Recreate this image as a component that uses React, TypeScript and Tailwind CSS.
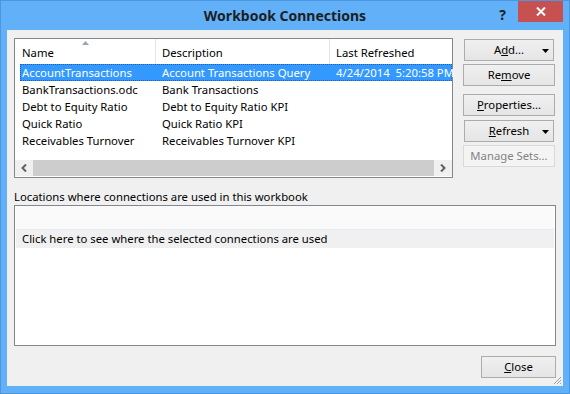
import React from "react";

type Row = { name: string; desc: string; refreshed?: string };

const rows: Row[] = [
  { name: "AccountTransactions", desc: "Account Transactions Query", refreshed: "4/24/2014  5:20:58 PM" },
  { name: "BankTransactions.odc", desc: "Bank Transactions" },
  { name: "Debt to Equity Ratio", desc: "Debt to Equity Ratio KPI" },
  { name: "Quick Ratio", desc: "Quick Ratio KPI" },
  { name: "Receivables Turnover", desc: "Receivables Turnover KPI" },
];

function DropArrow() {
  return (
    <svg width="7" height="4" viewBox="0 0 7 4" className="absolute right-[4px] top-[9px]">
      <path d="M0 0h7L3.5 4z" fill="#000" />
    </svg>
  );
}

function Btn({
  children,
  disabled,
  split,
  className = "",
}: {
  children: React.ReactNode;
  disabled?: boolean;
  split?: boolean;
  className?: string;
}) {
  return (
    <div
      className={
        "relative flex h-[22px] items-center justify-center border leading-none " +
        (disabled
          ? "border-[#d9d9d9] bg-[#f4f4f4] text-[#838383] "
          : "border-[#acacac] bg-gradient-to-b from-[#f0f0f0] to-[#e5e5e5] text-black ") +
        className
      }
    >
      <span>{children}</span>
      {split && <DropArrow />}
    </div>
  );
}

export default function App() {
  return (
    <div className="flex h-[394px] w-[570px] flex-col border border-[#4a97df] bg-[#61b0f8] font-['Noto_Sans',sans-serif] text-[11.3px] text-black">
      {/* title bar */}
      <div className="grid h-[29px] grid-cols-[1fr_auto_1fr]">
        <div />
        <div className="pt-[4px] text-[14px] font-bold text-[#1e1e1e]">Workbook Connections</div>
        <div className="flex items-start justify-end pr-[6px]">
          <span className="mr-[12px] mt-[3px] text-[14px] font-bold text-[#1e1e1e]">?</span>
          <div className="flex h-[21px] w-[45px] items-center justify-center bg-[#c75050]">
            <svg width="10" height="9" viewBox="0 0 10 9">
              <path d="M1 0.5l8 8M9 0.5l-8 8" stroke="#fff" strokeWidth="2" />
            </svg>
          </div>
        </div>
      </div>

      {/* client area */}
      <div className="relative mx-[6px] mb-[7px] flex flex-1 flex-col bg-[#f0f0f0] px-[7px] pt-[8px]">
        <div className="flex items-start gap-[10px]">
          {/* list view */}
          <div className="flex h-[140px] w-[439px] flex-col border border-[#828790] bg-white">
            <div className="flex h-[25px] shrink-0 items-center">
              <div className="relative flex h-full w-[140px] shrink-0 items-center pl-[7px] pt-[3px]">
                <svg width="7" height="4" viewBox="0 0 7 4" className="absolute left-[67px] top-[2px]">
                  <path d="M3.5 0L7 4H0z" fill="#97a6b9" />
                </svg>
                Name
              </div>
              <div className="h-full w-px shrink-0 bg-[#e5e5e5]" />
              <div className="flex h-full w-[173px] shrink-0 items-center pl-[6px] pt-[3px]">Description</div>
              <div className="h-full w-px shrink-0 bg-[#e5e5e5]" />
              <div className="flex h-full flex-1 items-center pl-[6px] pt-[3px]">Last Refreshed</div>
            </div>
            <div className="flex flex-col pl-[5px]">
              {rows.map((r, i) => (
                <div
                  key={r.name}
                  className={
                    "flex h-[17px] items-center whitespace-pre pt-px " +
                    (i === 0 ? "border border-dotted border-[#1c5fae] bg-[#3399ff] text-white" : "border border-transparent")
                  }
                >
                  <div className="w-[135px] shrink-0 pl-px">{r.name}</div>
                  <div className="w-[174px] shrink-0 pl-[6px]">{r.desc}</div>
                  <div className="min-w-0 flex-1 pl-[6px]">{r.refreshed ?? ""}</div>
                </div>
              ))}
            </div>
            <div className="flex-1" />
            {/* horizontal scrollbar */}
            <div className="mb-px flex h-[16px] shrink-0 bg-[#f0f0f0]">
              <div className="flex w-[18px] items-center justify-center">
                <svg width="6" height="8" viewBox="0 0 6 8">
                  <path d="M5 0.5L1.5 4L5 7.5" stroke="#606060" strokeWidth="2" fill="none" />
                </svg>
              </div>
              <div className="flex-1 bg-[#cdcdcd]" />
              <div className="flex w-[18px] items-center justify-center">
                <svg width="6" height="8" viewBox="0 0 6 8">
                  <path d="M1 0.5L4.5 4L1 7.5" stroke="#606060" strokeWidth="2" fill="none" />
                </svg>
              </div>
            </div>
          </div>

          {/* buttons */}
          <div className="flex w-[92px] flex-col pt-px">
            <Btn split className="mx-px">
              A<span className="underline">d</span>d...
            </Btn>
            <Btn className="mt-[3px]">
              Re<span className="underline">m</span>ove
            </Btn>
            <Btn className="mt-[8px]">
              <span className="underline">P</span>roperties...
            </Btn>
            <Btn split className="mx-px mt-[4px]">
              <span className="underline">R</span>efresh
            </Btn>
            <Btn disabled className="mt-[3px]">
              Manage Sets...
            </Btn>
          </div>
        </div>

        <div className="mt-[11px] h-[16px] leading-[16px]">Locations where connections are used in this workbook</div>
        <div className="flex h-[141px] flex-col border border-[#828790] bg-white px-px">
          <div className="h-[23px] bg-[#fafafa]" />
          <div className="h-px bg-[#e3edfa]" />
          <div className="flex h-[18px] items-center bg-[#f0f0f0] pl-[6px] pt-px">
            Click here to see where the selected connections are used
          </div>
        </div>

        <div className="mt-[10px] flex justify-end">
          <Btn className="w-[75px]">
            <span className="underline">C</span>lose
          </Btn>
        </div>

        <svg width="9" height="9" viewBox="0 0 9 9" className="absolute bottom-px right-px">
          <path d="M8 1L1 8M8 4L4 8M8 7L7 8" stroke="#a0a0a0" strokeWidth="1" />
        </svg>
      </div>
    </div>
  );
}
